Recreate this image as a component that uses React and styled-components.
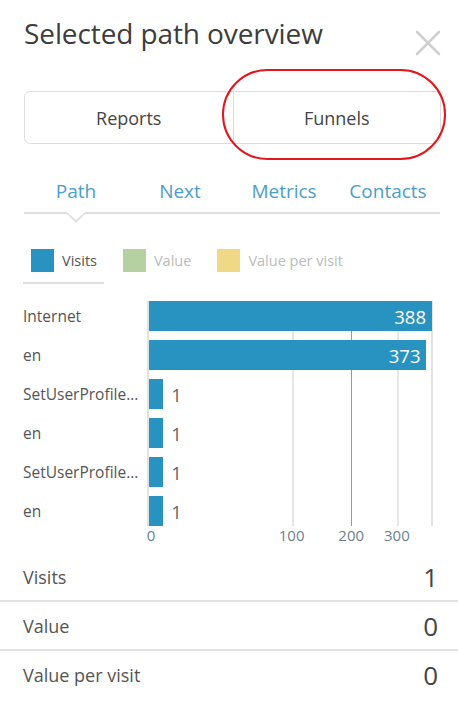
import React from 'react';
import styled, { createGlobalStyle } from 'styled-components';

const GlobalStyle = createGlobalStyle`
  html, body {
    margin: 0;
    padding: 0;
    background: #fff;
  }
  body {
    font-family: "Open Sans", "Noto Sans", sans-serif;
    color: #444;
  }
`;

const Panel = styled.div`
  width: 458px;
  height: 701px;
  overflow: hidden;
  background: #fff;
`;

const Header = styled.div`
  display: flex;
  justify-content: space-between;
  align-items: flex-start;
  padding: 14px 17px 0 24px;
  height: 91px;
  box-sizing: border-box;
`;

const Title = styled.h1`
  margin: 0;
  font-size: 28px;
  font-weight: 400;
  color: #3d3d3d;
  letter-spacing: -0.1px;
`;

const CloseButton = styled.button`
  border: none;
  background: transparent;
  padding: 0;
  margin-top: 16px;
  width: 26px;
  height: 26px;
  cursor: pointer;
`;

const SwitchWrap = styled.div`
  position: relative;
  padding: 0 17px 0 24px;
`;

const Switch = styled.div`
  display: grid;
  grid-template-columns: 1fr 1fr;
  height: 53px;
  border: 1px solid #ddd;
  border-radius: 6px;
  box-sizing: border-box;
`;

const SwitchButton = styled.button`
  border: none;
  background: transparent;
  font-family: inherit;
  font-size: 18px;
  color: #444;
  cursor: pointer;
  & + & {
    border-left: 1px solid #ddd;
  }
`;

const Annotation = styled.div`
  position: absolute;
  left: 222px;
  top: -22px;
  width: 224px;
  height: 91px;
  border: 2px solid #e3161d;
  border-radius: 46px;
  box-sizing: border-box;
  pointer-events: none;
`;

const Tabs = styled.div`
  display: grid;
  grid-template-columns: repeat(4, 1fr);
  margin: 23px 18px 0 24px;
  border-bottom: 2px solid #e0e0e0;
`;

const Tab = styled.div`
  position: relative;
  text-align: center;
  font-size: 19px;
  color: #4b9ecb;
  height: 45px;
  line-height: 48px;
  cursor: pointer;

  ${({ $active }) => $active && `
    &::before, &::after {
      content: '';
      position: absolute;
      left: 50%;
      transform: translateX(-50%);
      border-left: 9px solid transparent;
      border-right: 9px solid transparent;
    }
    &::before {
      bottom: -11px;
      border-top: 9px solid #e0e0e0;
    }
    &::after {
      bottom: -8px;
      border-top: 8px solid #fff;
    }
  `}
`;

const Legend = styled.div`
  display: flex;
  gap: 11px;
  margin: 35px 0 0 23px;
`;

const LegendItem = styled.div`
  display: flex;
  align-items: center;
  gap: 8px;
  padding: 0 7px 10px 8px;
  font-size: 14.5px;
  color: ${({ $active }) => ($active ? '#555' : '#bbb')};
  border-bottom: 2px solid ${({ $active }) => ($active ? '#e0e0e0' : 'transparent')};
`;

const Swatch = styled.span`
  width: 23px;
  height: 23px;
  background: ${({ $color }) => $color};
`;

const Chart = styled.div`
  display: grid;
  grid-template-columns: 125px 285px;
  margin: 17px 0 0 23px;
`;

const Labels = styled.div`
  display: flex;
  flex-direction: column;
  gap: 9px;
`;

const Label = styled.div`
  height: 30px;
  line-height: 30px;
  font-size: 15.5px;
  color: #555;
  white-space: nowrap;
`;

const Plot = styled.div`
  position: relative;
  display: flex;
  flex-direction: column;
  gap: 9px;
  border-left: 2px solid #e2e2e2;
  border-right: 2px solid #e2e2e2;
  margin-left: -1px;
`;

const GridLine = styled.div`
  position: absolute;
  top: 0;
  bottom: 0;
  width: ${({ $dark }) => ($dark ? '1px' : '2px')};
  background: ${({ $dark }) => ($dark ? '#9a9a9a' : '#e6e6e6')};
`;

const BarRow = styled.div`
  position: relative;
  display: flex;
  align-items: center;
  height: 30px;
`;

const Bar = styled.div`
  height: 30px;
  background: #2893c1;
  display: flex;
  align-items: center;
  justify-content: flex-end;
  box-sizing: border-box;
  padding-right: 6px;
  font-size: 18.5px;
  color: #fff;
  flex-shrink: 0;
`;

const OuterValue = styled.span`
  margin-left: 8px;
  font-size: 18.5px;
  color: #666;
`;

const Axis = styled.div`
  position: relative;
  grid-column: 2;
  height: 22px;
`;

const Tick = styled.span`
  position: absolute;
  top: -1px;
  transform: translateX(-50%);
  font-size: 15px;
  color: #6c7f8c;
`;

const Stats = styled.div`
  margin-top: 5px;
`;

const StatRow = styled.div`
  display: flex;
  justify-content: space-between;
  align-items: center;
  height: 47px;
  padding: 0 20px 0 23px;
  & + & {
    border-top: 2px solid #e2e2e2;
  }
`;

const StatLabel = styled.span`
  font-size: 18px;
  color: #555;
`;

const StatValue = styled.span`
  font-size: 26px;
  color: #444;
`;

const rows = [
  { label: 'Internet', value: 388 },
  { label: 'en', value: 373 },
  { label: 'SetUserProfile...', value: 1 },
  { label: 'en', value: 1 },
  { label: 'SetUserProfile...', value: 1 },
  { label: 'en', value: 1 },
];

const PLOT_WIDTH = 283;
const MAX = 388;
const scale = (v) => (Math.sqrt(v) / Math.sqrt(MAX)) * PLOT_WIDTH;

const ticks = [0, 100, 200, 300];

const CloseIcon = () => (
  <svg width="26" height="26" viewBox="0 0 26 26">
    <path d="M2 2 L24 24 M24 2 L2 24" stroke="#d0d0d0" strokeWidth="2.6" strokeLinecap="round" />
  </svg>
);

export default function App() {
  return (
    <Panel>
      <GlobalStyle />
      <Header>
        <Title>Selected path overview</Title>
        <CloseButton aria-label="Close">
          <CloseIcon />
        </CloseButton>
      </Header>

      <SwitchWrap>
        <Switch>
          <SwitchButton>Reports</SwitchButton>
          <SwitchButton>Funnels</SwitchButton>
        </Switch>
        <Annotation />
      </SwitchWrap>

      <Tabs>
        <Tab $active>Path</Tab>
        <Tab>Next</Tab>
        <Tab>Metrics</Tab>
        <Tab>Contacts</Tab>
      </Tabs>

      <Legend>
        <LegendItem $active>
          <Swatch $color="#2893c1" />
          Visits
        </LegendItem>
        <LegendItem>
          <Swatch $color="#b5d1a2" />
          Value
        </LegendItem>
        <LegendItem>
          <Swatch $color="#efd886" />
          Value per visit
        </LegendItem>
      </Legend>

      <Chart>
        <Labels>
          {rows.map((r, i) => (
            <Label key={i}>{r.label}</Label>
          ))}
        </Labels>
        <Plot>
          {ticks.slice(1).map((t) => (
            <GridLine key={t} $dark={t === 200} style={{ left: scale(t) - 1 }} />
          ))}
          {rows.map((r, i) => {
            const w = Math.max(scale(r.value), 14);
            const inside = w > 60;
            return (
              <BarRow key={i}>
                <Bar style={{ width: w }}>{inside ? r.value : null}</Bar>
                {!inside && <OuterValue>{r.value}</OuterValue>}
              </BarRow>
            );
          })}
        </Plot>
        <Axis>
          {ticks.map((t) => (
            <Tick key={t} style={{ left: scale(t) + (t === 0 ? 3 : 0) }}>
              {t}
            </Tick>
          ))}
        </Axis>
      </Chart>

      <Stats>
        <StatRow>
          <StatLabel>Visits</StatLabel>
          <StatValue>1</StatValue>
        </StatRow>
        <StatRow>
          <StatLabel>Value</StatLabel>
          <StatValue>0</StatValue>
        </StatRow>
        <StatRow>
          <StatLabel>Value per visit</StatLabel>
          <StatValue>0</StatValue>
        </StatRow>
      </Stats>
    </Panel>
  );
}
